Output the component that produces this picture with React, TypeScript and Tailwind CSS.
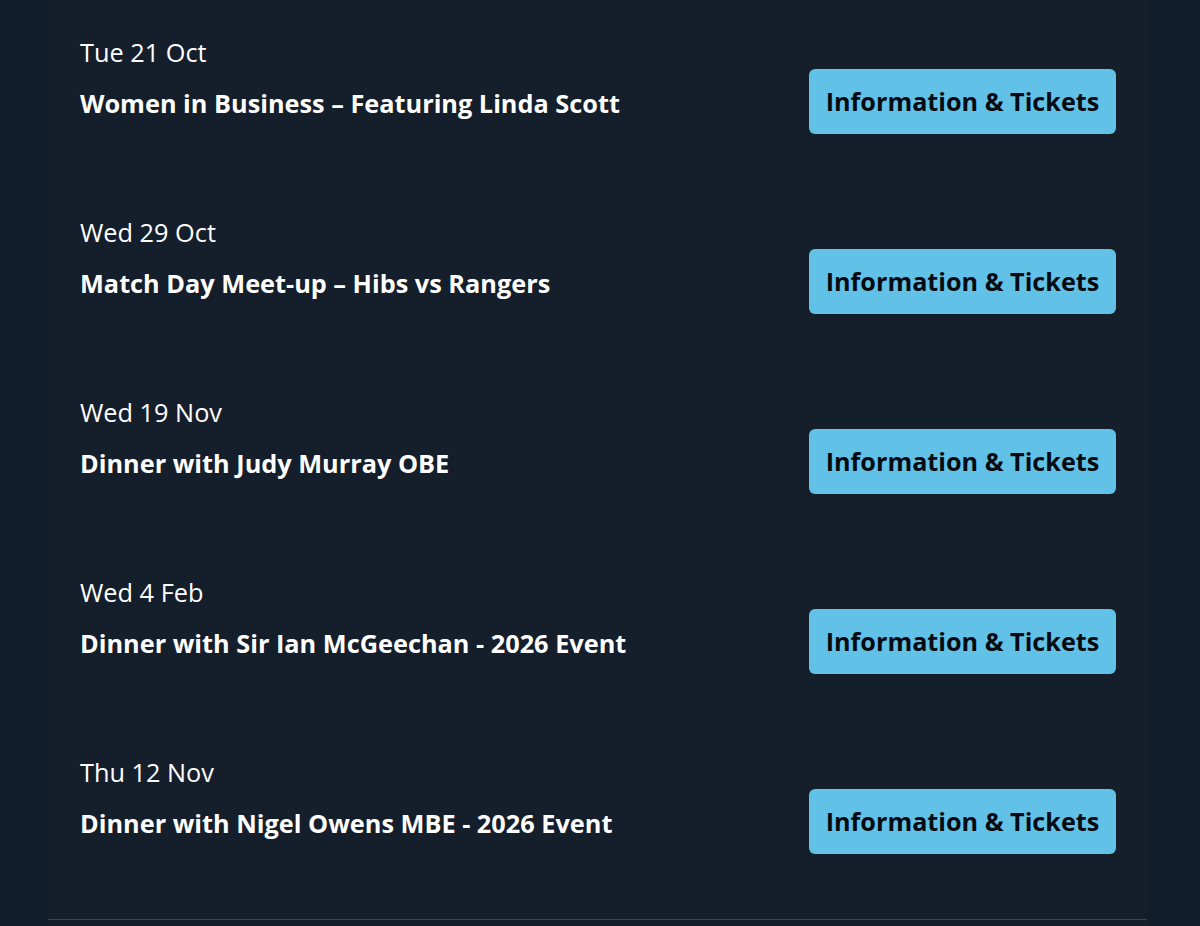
import React from "react";

const events = [
  { date: "Tue 21 Oct", title: "Women in Business – Featuring Linda Scott" },
  { date: "Wed 29 Oct", title: "Match Day Meet-up – Hibs vs Rangers" },
  { date: "Wed 19 Nov", title: "Dinner with Judy Murray OBE" },
  { date: "Wed 4 Feb", title: "Dinner with Sir Ian McGeechan - 2026 Event" },
  { date: "Thu 12 Nov", title: "Dinner with Nigel Owens MBE - 2026 Event" },
];

export default function App() {
  return (
    <div
      className="min-h-[926px] w-full bg-[#111d2a] overflow-hidden"
      style={{ fontFamily: '"Open Sans", "Noto Sans", sans-serif' }}
    >
      <div className="ml-[48px] w-[1099px] bg-[#151e2b] min-h-[926px] flex flex-col">
        <div className="flex flex-col gap-[82px] pt-[36px] pl-[32px] pr-[31px]">
          {events.map((e) => (
            <div key={e.date + e.title} className="flex flex-col">
              <div className="h-[33px] leading-[33px] text-[25.3px] text-white">{e.date}</div>
              <div className="flex items-center justify-between">
                <h3 className="text-[25.3px] font-bold text-white leading-[36px] pt-[3px]">{e.title}</h3>
                <button className="h-[65px] w-[307px] rounded-[6px] bg-[#62c1e6] text-[25.2px] font-bold text-[#070b11]">
                  Information &amp; Tickets
                </button>
              </div>
            </div>
          ))}
        </div>
        <div className="mt-[65px] h-px bg-[#3a4452]" />
      </div>
    </div>
  );
}
